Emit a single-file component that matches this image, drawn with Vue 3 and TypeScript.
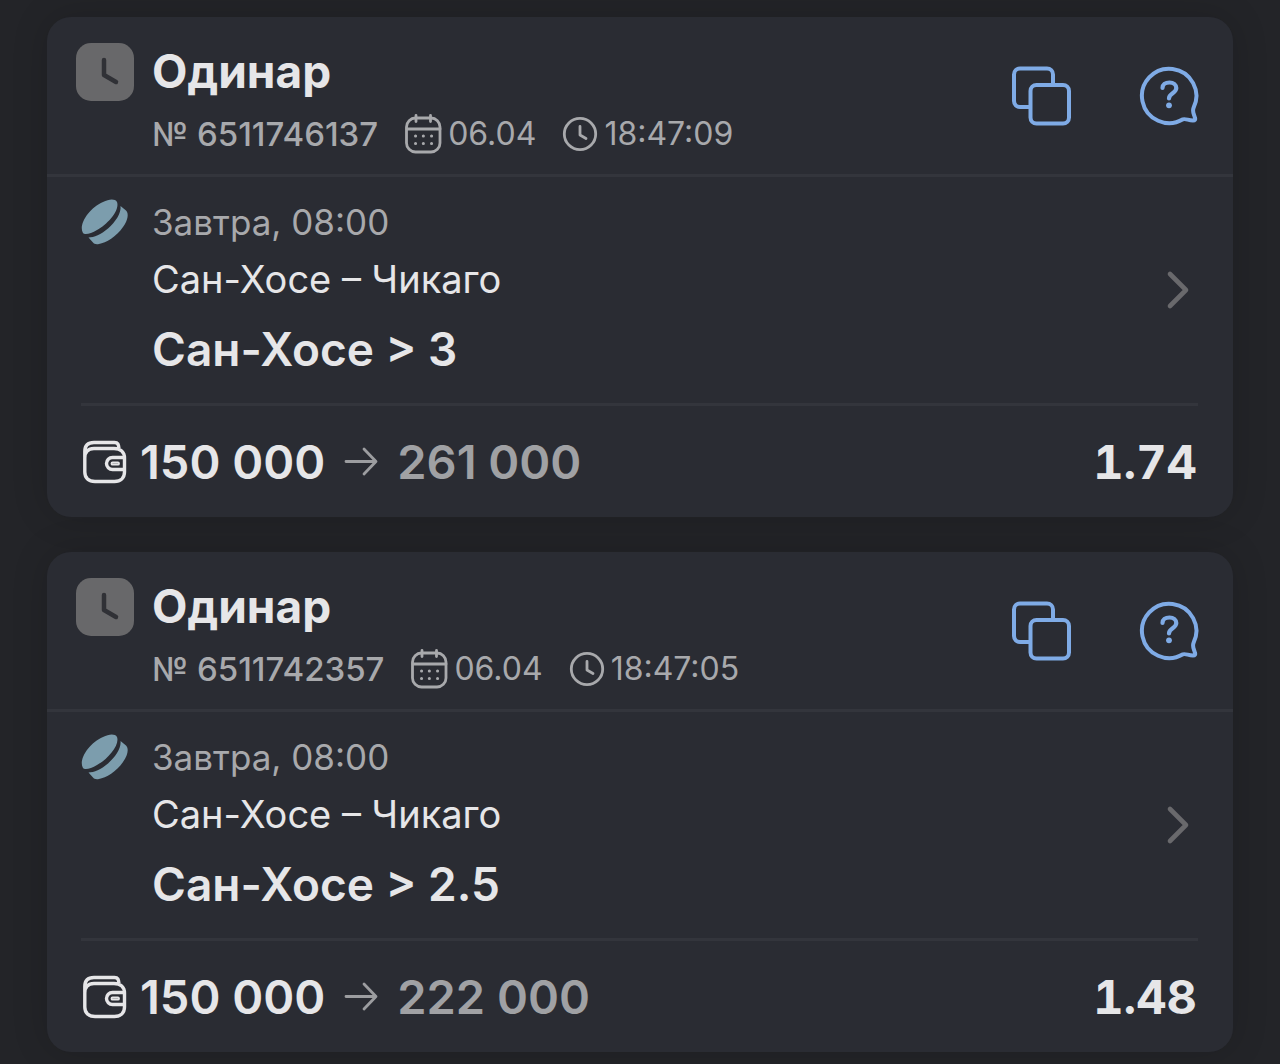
<script setup lang="ts">
interface Bet {
  id: string
  type: string
  date: string
  time: string
  start: string
  match: string
  pick: string
  stake: string
  payout: string
  odds: string
}

const bets: Bet[] = [
  {
    id: '6511746137',
    type: 'Одинар',
    date: '06.04',
    time: '18:47:09',
    start: 'Завтра, 08:00',
    match: 'Сан-Хосе – Чикаго',
    pick: 'Сан-Хосе > 3',
    stake: '150 000',
    payout: '261 000',
    odds: '1.74',
  },
  {
    id: '6511742357',
    type: 'Одинар',
    date: '06.04',
    time: '18:47:05',
    start: 'Завтра, 08:00',
    match: 'Сан-Хосе – Чикаго',
    pick: 'Сан-Хосе > 2.5',
    stake: '150 000',
    payout: '222 000',
    odds: '1.48',
  },
]
</script>

<template>
  <main class="history">
    <article v-for="bet in bets" :key="bet.id" class="card">
      <header class="head">
        <span class="status">
          <svg width="58" height="58" viewBox="0 0 58 58" aria-hidden="true">
            <rect width="58" height="58" rx="15" fill="#68686a" />
            <path d="M28 17v15l12 7" fill="none" stroke="#303136" stroke-width="4.500" stroke-linecap="round" stroke-linejoin="round" />
          </svg>
        </span>
        <div class="summary">
          <h2 class="type">{{ bet.type }}</h2>
          <div class="meta">
            <span class="number">№ {{ bet.id }}</span>
            <span class="stamp">
              <svg width="38" height="42" viewBox="0 0 38 42" fill="none" stroke="#a8a9ac" stroke-width="2.800" stroke-linecap="round" aria-hidden="true">
                <rect x="2.500" y="5" width="33.500" height="34" rx="9" />
                <path d="M3 16h33M12 2.500v6M26.500 2.500v6" />
                <path d="M11.500 23h.1M19.300 23h.1M27.500 23h.1M11.500 30.500h.1M19.300 30.500h.1M27.500 30.500h.1" stroke-width="3" />
              </svg>
              <time>{{ bet.date }}</time>
            </span>
            <span class="stamp">
              <svg width="36" height="36" viewBox="0 0 36 36" fill="none" stroke="#a8a9ac" stroke-width="2.800" stroke-linecap="round" stroke-linejoin="round" aria-hidden="true">
                <circle cx="18" cy="18" r="15.700" />
                <path d="M18 10.500v8.500l6 3.500" />
              </svg>
              <time>{{ bet.time }}</time>
            </span>
          </div>
        </div>
        <div class="actions">
          <button type="button" aria-label="Скопировать">
            <svg width="60" height="60" viewBox="0 0 60 60" fill="none" stroke="#7fabe6" stroke-width="4" stroke-linejoin="round">
              <rect x="19.500" y="19" width="38.500" height="38.500" rx="6" />
              <path d="M42 19V8.500a6 6 0 0 0-6-6H9a6 6 0 0 0-6 6V35a6 6 0 0 0 6 6h10.500" />
            </svg>
          </button>
          <button type="button" aria-label="Помощь">
            <svg width="60" height="60" viewBox="0 0 60 60" fill="none" stroke="#7fabe6" stroke-width="4" stroke-linecap="round" stroke-linejoin="round">
              <path d="M54.500 42A27.200 27.200 0 1 0 44 53.300C46.500 52.500 49 54.200 54 54.500C56 54.500 56.500 53.500 56 52C55.300 48.500 53 46 54.500 42Z" />
              <path d="M23.500 22c0-3.500 2.800-5.500 7-5.500c4 0 6.800 2.300 6.800 5.600c0 5.200-7.300 5.200-7.300 10.400" stroke-width="4.200" />
              <circle cx="30" cy="39.300" r="2.900" fill="#7fabe6" stroke="none" />
            </svg>
          </button>
        </div>
      </header>

      <section class="event">
        <svg class="puck" width="48" height="46" viewBox="0 0 48 46" fill="#7c9dad" aria-hidden="true">
          <path d="M2 34C-3 26 8 9 22 3C28 0 34-.5 36 3C39 11 27 25 16 31C10 34.500 4 36.500 2 34Z" />
          <path d="M39.500 7L45 11.500C48 14.500 47 21 42 28C35.500 37.500 25 44 18 45C15 45.500 13 45 12 43.500L7.500 38.500C13 38.500 20 35.500 27 29.500C34.500 23 40.500 14 39.500 7Z" />
        </svg>
        <div class="details">
          <p class="start">{{ bet.start }}</p>
          <p class="match">{{ bet.match }}</p>
          <p class="pick">{{ bet.pick }}</p>
        </div>
        <button type="button" class="open" aria-label="Подробнее">
          <svg width="24" height="40" viewBox="0 0 24 40" fill="none" stroke="#69696c" stroke-width="4.600" stroke-linecap="round" stroke-linejoin="round">
            <path d="M4 4l16 16L4 36" />
          </svg>
        </button>
      </section>

      <footer class="foot">
        <svg width="46" height="46" viewBox="0 0 46 46" fill="none" stroke="#e6e6e8" stroke-width="3.400" stroke-linejoin="round" aria-hidden="true">
          <path d="M2.800 19C2.800 13 6 9.500 12 9.500H32C38.500 9.500 42.500 13 42.500 19V33C42.500 39 38.500 42.500 32.500 42.500H13C6.500 42.500 2.800 39 2.800 33V12.500C2.800 6.500 6 3.500 12 3.500H32.500C36 3.500 36.500 5.500 37 9.500" />
          <path d="M42.500 18.500H30.500a6 6 0 0 0 0 12H42.500" />
          <rect x="29.500" y="23.500" width="7.500" height="2.200" rx="1" stroke-width="1.800" />
        </svg>
        <span class="stake">{{ bet.stake }}</span>
        <svg class="arrow" width="36" height="32" viewBox="0 0 36 32" fill="none" stroke="#9c9da0" stroke-width="2.800" stroke-linecap="round" stroke-linejoin="round" aria-hidden="true">
          <path d="M3 15.500h29.500M21 3l12 12.500L21 28" />
        </svg>
        <span class="payout">{{ bet.payout }}</span>
        <span class="odds">{{ bet.odds }}</span>
      </footer>
    </article>
  </main>
</template>

<style>
body {
  background: #232428;
}
</style>

<style scoped>
.history {
  display: flex;
  flex-direction: column;
  gap: 35px;
  padding: 17px 47px 12px;
  font-family: Inter, 'Liberation Sans', sans-serif;
  color: #e6e6e8;
}

.card {
  border-radius: 24px;
  background: #2a2c33;
  box-shadow: 0 0 36px rgba(0, 0, 0, 0.16);
}

.head {
  display: flex;
  padding: 24px 34px 18px 29px;
  border-bottom: 3px solid #33353c;
}

.status {
  margin: 2px 18px 0 0;
}

svg {
  display: block;
  flex: none;
}

.summary {
  flex: 1;
}

.type {
  margin: 0;
  font-size: 46px;
  line-height: 60px;
  font-weight: 700;
}

.meta {
  display: flex;
  align-items: center;
  height: 44px;
  margin-top: 11px;
  font-size: 32px;
  line-height: 44px;
  color: #a8a9ac;
  white-space: nowrap;
}

.number {
  font-size: 33px;
  font-weight: 500;
}

.stamp {
  display: flex;
  align-items: center;
  gap: 6px;
  margin-left: 26px;
}

.actions {
  display: flex;
  align-items: center;
  gap: 68px;
  padding-bottom: 6px;
}

button {
  display: block;
  padding: 0;
  border: 0;
  background: none;
  cursor: pointer;
}

.event {
  display: flex;
  margin: 0 35px 0 34px;
  padding: 22px 0;
  border-bottom: 3px solid #33353c;
}

.puck {
  margin-right: 23px;
}

.details {
  flex: 1;
}

p {
  margin: 0;
}

.start {
  font-size: 35px;
  line-height: 46px;
  color: #a8a9ac;
}

.match {
  margin-top: 10px;
  font-size: 38px;
  line-height: 48px;
}

.pick {
  margin-top: 16px;
  padding-bottom: 2px;
  font-size: 46px;
  line-height: 60px;
  font-weight: 600;
}

.open {
  align-self: center;
  margin-right: 8px;
}

.foot {
  display: flex;
  align-items: center;
  height: 111px;
  padding: 0 36px 0 35px;
  font-size: 47px;
  line-height: 60px;
  font-weight: 600;
}

.stake {
  margin-left: 12px;
}

.arrow {
  margin: 0 18px;
}

.payout {
  color: #a0a1a4;
}

.odds {
  margin-left: auto;
  font-weight: 700;
  font-variant-numeric: tabular-nums;
}
</style>
